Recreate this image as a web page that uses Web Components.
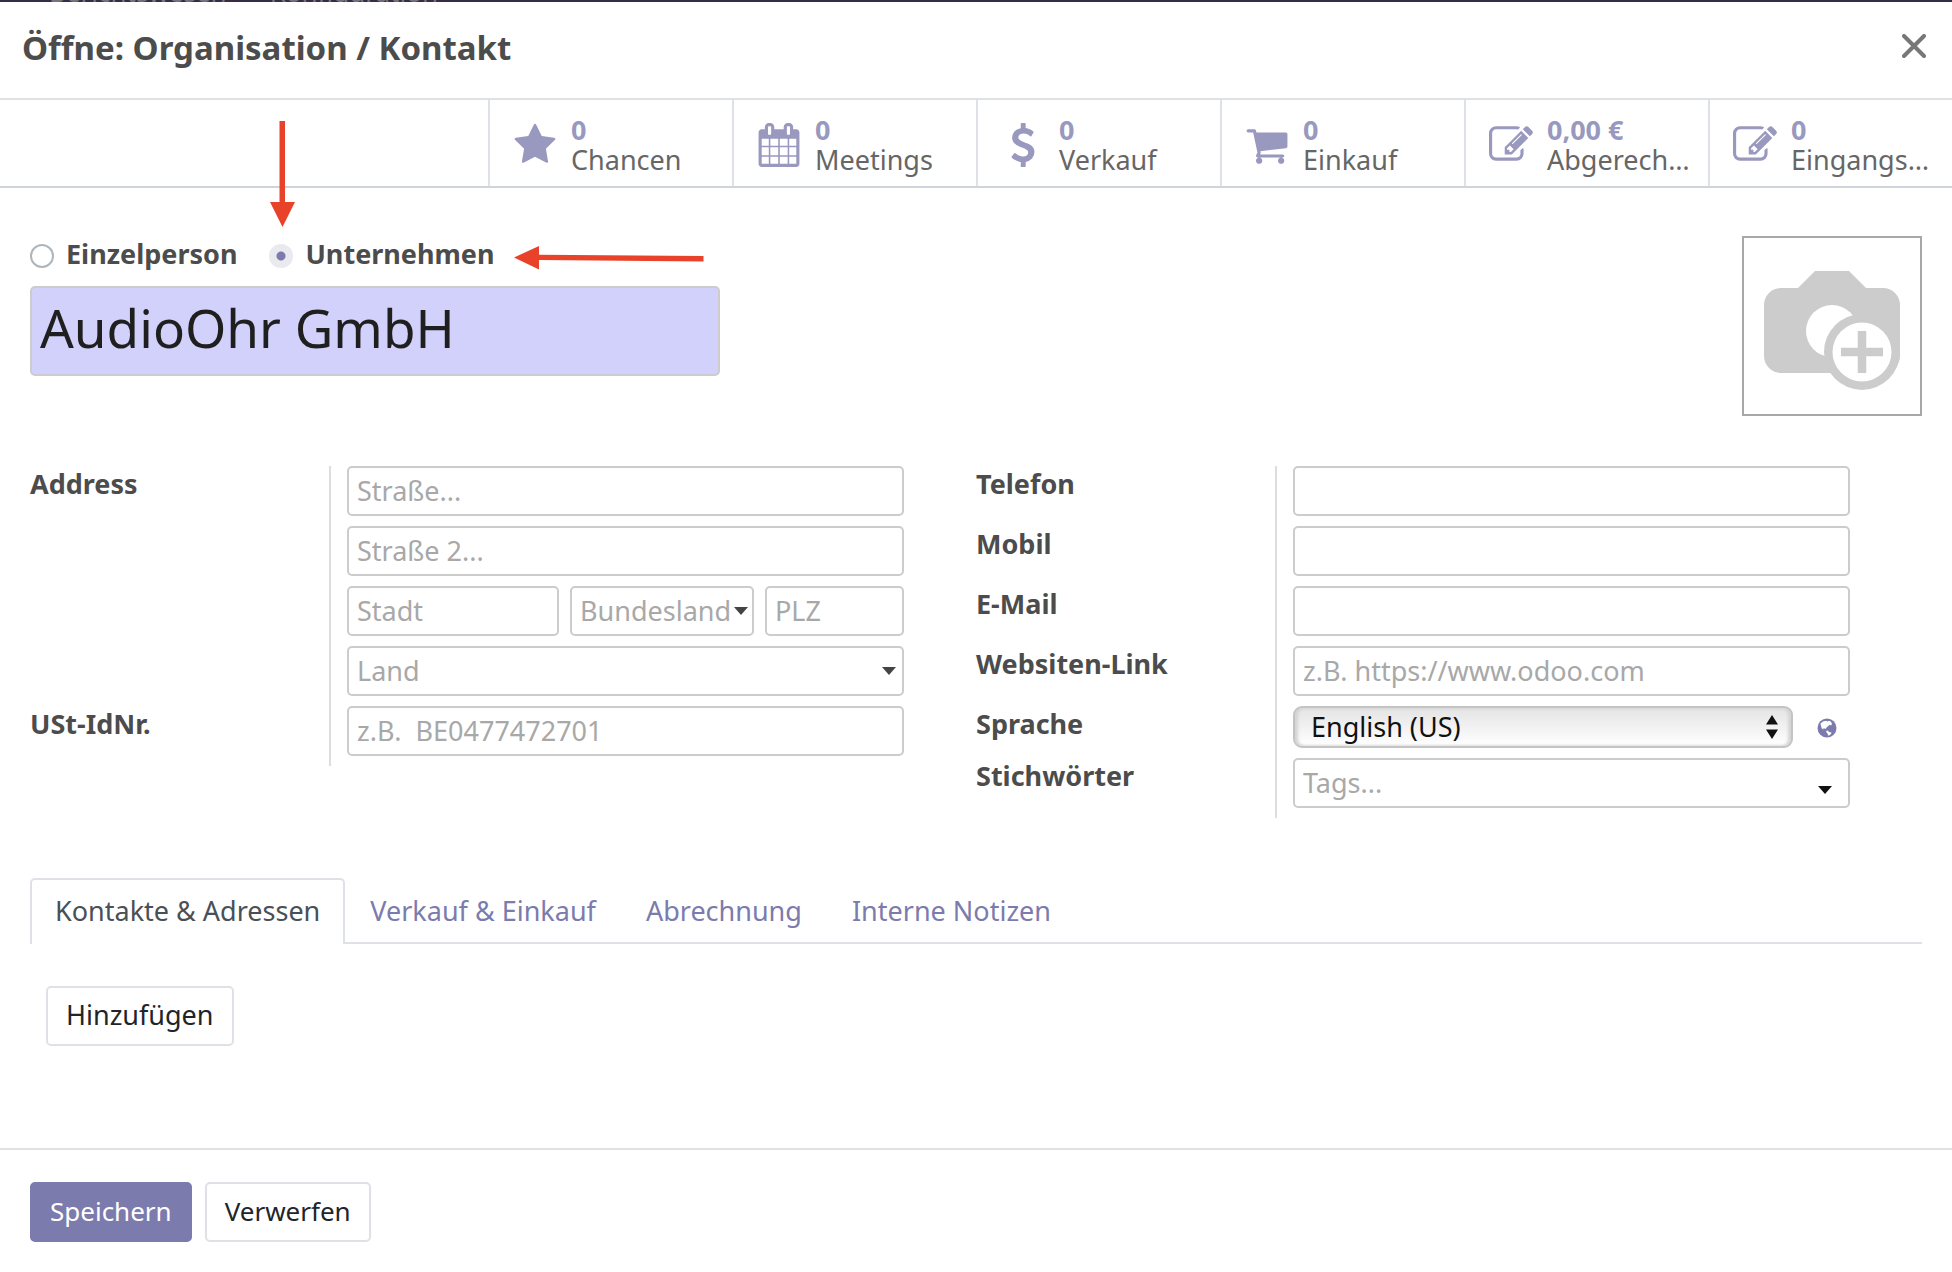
<!DOCTYPE html>
<html lang="de">
<head>
<meta charset="utf-8">
<title>Öffne: Organisation / Kontakt</title>
<style>
  body { margin: 0; background: #fff; font: 27px/36px "Noto Sans", "Open Sans", sans-serif; color: #4c4c4c; }
</style>
</head>
<body>
<contact-dialog></contact-dialog>
<script>
const define = (name, html) => {
  const tpl = document.createElement('template');
  tpl.innerHTML = html;
  customElements.define(name, class extends HTMLElement {
    constructor() {
      super();
      this.attachShadow({ mode: 'open' }).append(tpl.content.cloneNode(true));
    }
  });
};

const ICONS = {
  star: 'M1728 647q0 22-26 48l-363 354 86 500q1 7 1 20 0 21-10.5 35.5t-30.5 14.5q-19 0-40-12l-449-236-449 236q-22 12-40 12-21 0-31.5-14.5t-10.5-35.5q0-6 2-20l86-500-364-354q-25-27-25-48 0-37 56-46l502-73 225-455q19-41 49-41t49 41l225 455 502 73q56 9 56 46z',
  calendar: 'M192 1664h288v-288h-288v288zm352 0h320v-288h-320v288zm-352-352h288v-320h-288v320zm352 0h320v-320h-320v320zm-352-384h288v-288h-288v288zm736 736h320v-288h-320v288zm-384-736h320v-288h-320v288zm768 736h288v-288h-288v288zm-384-352h320v-320h-320v320zm-352-864v-288q0-13-9.5-22.500t-22.500-9.500h-64q-13 0-22.500 9.500t-9.500 22.500v288q0 13 9.500 22.500t22.500 9.500h64q13 0 22.500-9.500t9.500-22.500zm736 864h288v-320h-288v320zm-384-384h320v-288h-320v288zm384 0h288v-288h-288v288zm32-480v-288q0-13-9.500-22.500t-22.500-9.500h-64q-13 0-22.500 9.500t-9.500 22.500v288q0 13 9.500 22.500t22.500 9.500h64q13 0 22.500-9.500t9.500-22.500zm384-64v1280q0 52-38 90t-90 38h-1408q-52 0-90-38t-38-90v-1280q0-52 38-90t90-38h128v-96q0-66 47-113t113-47h64q66 0 113 47t47 113v96h384v-96q0-66 47-113t113-47h64q66 0 113 47t47 113v96h128q52 0 90 38t38 90z',
  dollar: 'M1362 1185q0 153-99.500 263.500t-258.500 136.500v175q0 14-9 23t-23 9h-135q-13 0-22.500-9.500t-9.500-22.500v-175q-66-9-127.500-31t-101.500-44.500-74-48-46.500-37.500-17.500-18q-17-21-2-41l103-135q7-10 23-12 15-2 24 9l2 2q113 99 243 125 37 8 74 8 81 0 142.500-43t61.500-122q0-28-15-53t-33.500-42-58.500-37.500-66-32-80-32.500q-39-16-61.500-25t-61.500-26.500-62.500-31-56.500-35.500-53.500-42.500-43.500-49-35.500-58-21-66.500-8.500-78q0-138 98-242t255-134v-180q0-13 9.500-22.500t22.500-9.500h135q14 0 23 9t9 23v176q57 6 110.500 23t87 33.500 63.500 37.500 39 29 15 14q17 18 5 38l-81 146q-8 15-23 16-14 3-27-7-3-3-14.500-12t-39-26.500-58.500-32-74.500-26-85.500-11.500q-95 0-155 43t-60 111q0 26 8.500 48t29.500 41.500 39.500 33 56 31 60.500 27 70 27.500q53 20 81 31.500t76 35 75.500 42.500 62 50 53 63.500 31.500 76.500 13 94z',
  cart: 'M704 1536q0 52-38 90t-90 38-90-38-38-90 38-90 90-38 90 38 38 90zm896 0q0 52-38 90t-90 38-90-38-38-90 38-90 90-38 90 38 38 90zm128-1088v512q0 24-16.500 42.500t-40.500 21.500l-1044 122q13 60 13 70 0 16-24 64h920q26 0 45 19t19 45-19 45-45 19h-1024q-26 0-45-19t-19-45q0-11 8-31.500t16-36 21.500-40 15.500-29.500l-177-823h-204q-26 0-45-19t-19-45 19-45 45-19h256q16 0 28.500 6.500t19.500 15.500 13 24.500 8 26 5.500 29.500 4.500 26h1201q26 0 45 19t19 45z',
  edit: 'M888 1184l116-116-152-152-116 116v56h96v96h56zm440-720q-16-16-33 1l-350 350q-17 17-1 33t33-1l350-350q17-17 1-33zm80 594v190q0 119-84.500 203.500t-203.500 84.500h-832q-119 0-203.500-84.500t-84.500-203.500v-832q0-119 84.500-203.500t203.500-84.500h832q63 0 117 25 15 7 18 23 3 17-9 29l-49 49q-14 14-32 8-23-6-45-6h-832q-66 0-113 47t-47 113v832q0 66 47 113t113 47h832q66 0 113-47t47-113v-126q0-13 9-22l64-64q15-15 35-7t20 29zm-96-738l288 288-672 672h-288v-288zm444 132l-92 92-288-288 92-92q28-28 68-28t68 28l152 152q28 28 28 68t-28 68z'
};

/* Smart button: icon, value and caption */
customElements.define('stat-button', class extends HTMLElement {
  connectedCallback() {
    if (this.shadowRoot) return;
    this.attachShadow({ mode: 'open' }).innerHTML = `
      <style>
        :host { display: block; flex: 0 0 12.5%; box-sizing: border-box; border-left: 2px solid #dee2e6; }
        button { display: flex; align-items: center; gap: 14px; width: 100%; height: 86px; padding: 4px 0 0 23px;
          border: 0; background: none; font: inherit; line-height: 30px; text-align: left; color: #666; white-space: nowrap; }
        svg { flex: none; width: 44px; height: 44px; fill: #9998be; }
        b, span { display: block; }
        b { color: #9998be; }
      </style>
      <button type="button">
        <svg viewBox="0 0 1792 1792" aria-hidden="true"><path d="${ICONS[this.getAttribute('icon')]}"/></svg>
        <span><b>${this.getAttribute('value')}</b><span><slot></slot></span></span>
      </button>`;
  }
});

/* One form line: caption on the left, ruled-off control on the right */
define('field-row', `
  <style>
    :host { display: flex; }
    .caption { flex: 0 0 299px; font-weight: 700; }
    .control { flex: 1; min-width: 0; display: flex; gap: 11px; border-left: 2px solid #ddd; padding: 0 72px 10px 16px; }
  </style>
  <div class="caption"><slot name="label"></slot></div>
  <div class="control"><slot></slot></div>`);

/* Adds the drop-down triangle over a slotted input */
define('combo-box', `
  <style>
    :host { display: flex; flex: 1; min-width: 0; position: relative; }
    svg { position: absolute; right: var(--caret-right, 8px); top: var(--caret-top, 21px); width: 14px; height: 8px; fill: var(--caret-color, #444); pointer-events: none; }
  </style>
  <slot></slot>
  <svg viewBox="0 0 14 8" aria-hidden="true"><path d="M0 0h14L7 8z"/></svg>`);

/* Adds the double arrow over a slotted select */
define('select-box', `
  <style>
    :host { display: flex; flex: 1; min-width: 0; position: relative; }
    svg { position: absolute; right: 15px; top: 9px; width: 12px; height: 24px; fill: #111; pointer-events: none; }
  </style>
  <slot></slot>
  <svg viewBox="0 0 12 24" aria-hidden="true"><path d="M6 0l6 9.500H0zM6 24l6-9.500H0z"/></svg>`);

define('image-field', `
  <style>
    :host { display: block; flex: none; }
    button { display: block; padding: 0; border: 2px solid #a8a8a8; background: #fff; }
    svg { display: block; width: 176px; height: 176px; }
  </style>
  <button type="button" aria-label="Bild bearbeiten">
    <svg viewBox="2 2 176 176" aria-hidden="true">
      <path fill="#ccc" d="M39 52H56L73 35H107L124 52H141A17 17 0 0 1 158 69V120A17 17 0 0 1 141 137H39A17 17 0 0 1 22 120V69A17 17 0 0 1 39 52Z"/>
      <circle cx="90" cy="95" r="26" fill="#fff"/>
      <circle cx="120" cy="116" r="38" fill="#ccc"/>
      <circle cx="120" cy="116" r="29.500" fill="#fff"/>
      <path stroke="#ccc" stroke-width="8.500" d="M99 116H141M120 95V137"/>
    </svg>
  </button>`);

define('app-button', `
  <style>
    :host { display: inline-block; }
    button { height: 60px; box-sizing: border-box; padding: 0 18px 2px; border: 2px solid #dee2e6; border-radius: 5px;
      background: #fff; color: #212529; font: inherit; }
    :host([primary]) button { background: #7c7bad; border-color: #7c7bad; color: #fff; }
  </style>
  <button type="button"><slot></slot></button>`);

define('note-book', `
  <style>
    :host { display: block; }
    nav { display: flex; border-bottom: 2px solid #dee2e6; }
    a { padding: 13px 23px 15px; border: 2px solid transparent; border-bottom: 0; color: #7c7bad; text-decoration: none; margin-bottom: -2px; }
    a.active { background: #fff; color: #495057; border-color: #dee2e6; border-radius: 5px 5px 0 0; }
    .pane { padding: 42px 16px 0; }
  </style>
  <nav>
    <a class="active" href="#kontakte">Kontakte &amp; Adressen</a>
    <a href="#verkauf">Verkauf &amp; Einkauf</a>
    <a href="#abrechnung">Abrechnung</a>
    <a href="#notizen">Interne Notizen</a>
  </nav>
  <div class="pane"><slot></slot></div>`);

/* Red pointers at the company option */
define('hint-arrows', `
  <style>
    :host { position: absolute; left: 269px; top: 120px; pointer-events: none; }
    svg { display: block; width: 436px; height: 152px; fill: #e9422a; }
  </style>
  <svg viewBox="269 120 436 152" aria-hidden="true">
    <path d="M279.500 121h5.500v81h10l-12.500 25-12.500-25h9.500z"/>
    <path d="M514 257.500L539 246v8.700l164.500 1.300v5.500l-164.500-1.500v9.500z"/>
  </svg>`);

define('contact-form', `
  <style>
    :host { display: block; padding: 48px 30px 0; }
    input, select { font: inherit; color: #212529; }
    input:not([type=radio]) { flex: 1; width: 0; min-width: 0; height: 50px; box-sizing: border-box; border: 2px solid #ccc; border-radius: 5px; padding: 0 8px 2px; background: #fff; }
    input::placeholder { color: #a8a8a8; opacity: 1; }
    .top { display: flex; justify-content: space-between; align-items: flex-start; }
    .identity { flex: 0 1 690px; }
    .kind { display: flex; align-items: center; gap: 12px; height: 40px; font-weight: 700; }
    .kind label:first-of-type { margin-right: 20px; }
    input[type=radio] { appearance: none; flex: none; width: 24px; height: 24px; margin: 0; box-sizing: border-box; border: 2px solid #adb5bd; border-radius: 50%; }
    input[type=radio]:checked { border: 0; background: radial-gradient(circle, #7c7bad 4px, #e9e9ef 5px); }
    .kind label { line-height: 36px; padding-bottom: 4px; }
    .name { display: flex; margin-top: 10px; }
    .name input:not([type=radio]) { height: 90px; padding: 0 8px 8px; font-size: 53px; background: #d2d1fb; color: #1f1f1f; }
    .groups { display: grid; grid-template-columns: 1fr 1fr; align-items: start; margin: 50px 0 60px; }
    .state { flex: 184; --caret-right: 6px; }
    .state input:not([type=radio]) { padding-right: 20px; }
    input.city:not([type=radio]) { flex: 192; }
    input.zip:not([type=radio]) { flex: 119; }
    .tags { --caret-right: 18px; --caret-top: 28px; --caret-color: #111; }
    select { appearance: none; flex: 1; width: 0; height: 42px; padding: 0 32px 0 16px; border: 2px solid #c4c4c4; border-radius: 9px; color: #111;
      background: linear-gradient(#e4e4e4, #fff); box-shadow: inset 3px 0 3px #d4d4d4, inset -3px 0 3px #d4d4d4; line-height: 36px; }
    .translate { flex: none; align-self: center; width: 20px; height: 20px; margin: 2px 13px 0; padding: 0; border: 0; background: none; }
    .translate svg { display: block; }
  </style>
  <div class="top">
    <div class="identity">
      <div class="kind">
        <input type="radio" name="kind" id="person"><label for="person">Einzelperson</label>
        <input type="radio" name="kind" id="company" checked><label for="company">Unternehmen</label>
      </div>
      <div class="name"><input type="text" aria-label="Name" value="AudioOhr GmbH"></div>
    </div>
    <image-field></image-field>
  </div>
  <div class="groups">
    <div>
      <field-row><label slot="label" for="street">Address</label><input id="street" placeholder="Straße..."></field-row>
      <field-row><input aria-label="Straße 2" placeholder="Straße 2..."></field-row>
      <field-row>
        <input class="city" aria-label="Stadt" placeholder="Stadt">
        <combo-box class="state"><input aria-label="Bundesland" placeholder="Bundesland"></combo-box>
        <input class="zip" aria-label="PLZ" placeholder="PLZ">
      </field-row>
      <field-row><combo-box><input aria-label="Land" placeholder="Land"></combo-box></field-row>
      <field-row><label slot="label" for="vat">USt-IdNr.</label><input id="vat" placeholder="z.B.  BE0477472701"></field-row>
    </div>
    <div>
      <field-row><label slot="label" for="phone">Telefon</label><input id="phone" type="tel"></field-row>
      <field-row><label slot="label" for="mobile">Mobil</label><input id="mobile" type="tel"></field-row>
      <field-row><label slot="label" for="email">E-Mail</label><input id="email" type="email"></field-row>
      <field-row><label slot="label" for="site">Websiten-Link</label><input id="site" type="url" placeholder="z.B. https://www.odoo.com"></field-row>
      <field-row>
        <label slot="label" for="lang">Sprache</label>
        <select-box><select id="lang"><option>English (US)</option></select></select-box>
        <button class="translate" type="button" aria-label="Sprachen verwalten">
          <svg width="20" height="20" viewBox="0 0 20 20" aria-hidden="true">
            <circle cx="10" cy="10" r="9.500" fill="#7c7bad"/>
            <path fill="#fff" d="M3.500 5.500L6 3.500l3-.8 1.500.8 1.500-.8 2 1L15 6l-1 1.500-1.500-.8-1.500 1.500L9.500 9.500 8.500 11 6.500 10 6.500 11.500 4.800 10.500 4 8z"/>
            <path fill="#fff" d="M9.500 12.500l1.500.2 1 1.300 2.500.5-.5 1.500-1.500 1.300-1.500.2-.3-1.800-1.400-1.500z"/>
          </svg>
        </button>
      </field-row>
      <field-row><label slot="label" for="tags">Stichwörter</label><combo-box class="tags"><input id="tags" placeholder="Tags..."></combo-box></field-row>
    </div>
  </div>
  <note-book><app-button>Hinzufügen</app-button></note-book>`);

define('contact-dialog', `
  <style>
    :host { display: flex; flex-direction: column; min-height: 100vh; position: relative; }
    .menu { display: flex; align-items: flex-end; gap: 43px; height: 2px; padding-left: 49px; overflow: hidden; background: #352d45; color: #77727f; font-size: 26px; line-height: 28px; }
    .menu span { margin-bottom: -4px; }
    header { display: flex; justify-content: space-between; align-items: flex-start; padding: 22px 26px 26px 22px; border-bottom: 2px solid #dee2e2; }
    h1 { margin: 0; font-size: 33px; line-height: 48px; }
    header button { padding: 10px 0; border: 0; background: none; }
    header svg { display: block; }
    .stats { display: flex; justify-content: flex-end; border-bottom: 2px solid #ced4da; }
    main { flex: 1; }
    footer { display: flex; gap: 13px; padding: 32px 30px 30px; border-top: 2px solid #dee2e2; font-size: 26px; }
  </style>
  <div class="menu" aria-hidden="true"><span>Berichtswesen</span><span>Konfiguration</span></div>
  <header>
    <h1>Öffne: Organisation / Kontakt</h1>
    <button type="button" aria-label="Schließen">
      <svg width="24" height="24" viewBox="0 0 24 24" aria-hidden="true"><path d="M2 2L22 22M22 2L2 22" stroke="#777" stroke-width="4" stroke-linecap="round"/></svg>
    </button>
  </header>
  <div class="stats">
    <stat-button icon="star" value="0">Chancen</stat-button>
    <stat-button icon="calendar" value="0">Meetings</stat-button>
    <stat-button icon="dollar" value="0">Verkauf</stat-button>
    <stat-button icon="cart" value="0">Einkauf</stat-button>
    <stat-button icon="edit" value="0,00 €">Abgerech…</stat-button>
    <stat-button icon="edit" value="0">Eingangs…</stat-button>
  </div>
  <main><contact-form></contact-form></main>
  <footer>
    <app-button primary>Speichern</app-button>
    <app-button>Verwerfen</app-button>
  </footer>
  <hint-arrows></hint-arrows>`);
</script>
</body>
</html>
